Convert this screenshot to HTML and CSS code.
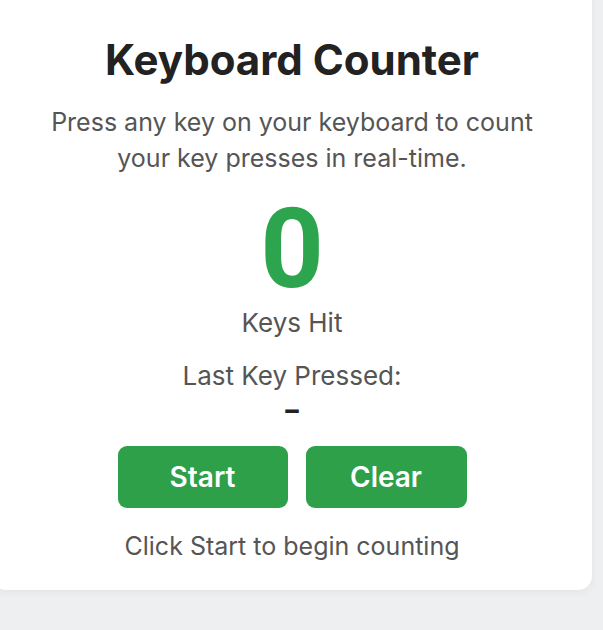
FILE: index.html
```html
<!DOCTYPE html>
<html lang="en">
<head>
    <meta charset="UTF-8">
    <meta name="viewport" content="width=device-width, initial-scale=1.0">
    <title>Keyboard Counter</title>
    <link rel="stylesheet" href="styles.css">
</head>
<body>
    <!-- Counter Card -->
    <div class="card">
        <h1 class="title">Keyboard Counter</h1>
        <p class="subtitle">Press any key on your keyboard to count<br>your key presses in real-time.</p>

        <div id="count" class="count">0</div>
        <p class="count-label">Keys Hit</p>

        <p class="last-label">Last Key Pressed:</p>
        <div id="last-key" class="last-key">–</div>

        <!-- Controls -->
        <div class="buttons">
            <button class="btn btn-start" onclick="startCounting()">Start</button>
            <button class="btn btn-clear" onclick="clearCount()">Clear</button>
        </div>

        <p id="status" class="status">Click Start to begin counting</p>
    </div>

    <script>
        let counting = false;
        let total = 0;

        function startCounting() {
            counting = true;
            document.getElementById('status').textContent = 'Counting... press any key';
        }

        function clearCount() {
            total = 0;
            document.getElementById('count').textContent = '0';
            document.getElementById('last-key').textContent = '–';
        }

        document.addEventListener('keydown', (e) => {
            if (!counting) return;
            total++;
            document.getElementById('count').textContent = total;
            document.getElementById('last-key').textContent = e.key === ' ' ? 'Space' : e.key;
        });
    </script>
</body>
</html>
```

FILE: styles.css
```css
* {
    margin: 0;
    padding: 0;
    box-sizing: border-box;
}

body {
    font-family: Inter, "Noto Sans", sans-serif;
    background-color: #eeeff1;
    color: #555;
    width: 603px;
    height: 630px;
    overflow: hidden;
}

/* Card */
.card {
    width: 600px;
    height: 610px;
    margin: -20px 0 0 -8px;
    padding-top: 55px;
    background-color: #fff;
    border-radius: 14px;
    box-shadow: 0 2px 8px rgba(0, 0, 0, 0.05);
    display: flex;
    flex-direction: column;
    align-items: center;
    text-align: center;
}

.title {
    font-size: 42px;
    font-weight: 700;
    color: #222;
    line-height: 50px;
}

.subtitle {
    margin-top: 19px;
    font-size: 25px;
    line-height: 36px;
}

/* Counter */
.count {
    margin-top: 23px;
    font-family: Roboto, sans-serif;
    font-size: 111px;
    font-weight: 700;
    line-height: 100px;
    color: #2da44e;
}

.count-label {
    margin-top: 8px;
    font-size: 26px;
    line-height: 32px;
}

.last-label {
    margin-top: 21px;
    font-size: 26px;
    line-height: 32px;
}

.last-key {
    margin-top: 3px;
    font-size: 27px;
    font-weight: 800;
    color: #222;
    line-height: 30px;
}

/* Buttons */
.buttons {
    margin-top: 21px;
    display: flex;
    gap: 18px;
}

.btn {
    height: 62px;
    border: none;
    border-radius: 9px;
    background-color: #2ea04a;
    color: #fff;
    font-family: inherit;
    font-size: 28px;
    font-weight: 600;
    cursor: pointer;
}

.btn-start {
    width: 170px;
}

.btn-clear {
    width: 161px;
}

.btn:hover {
    background-color: #2c9444;
}

.status {
    margin-top: 22px;
    font-size: 25px;
    line-height: 32px;
}
```
